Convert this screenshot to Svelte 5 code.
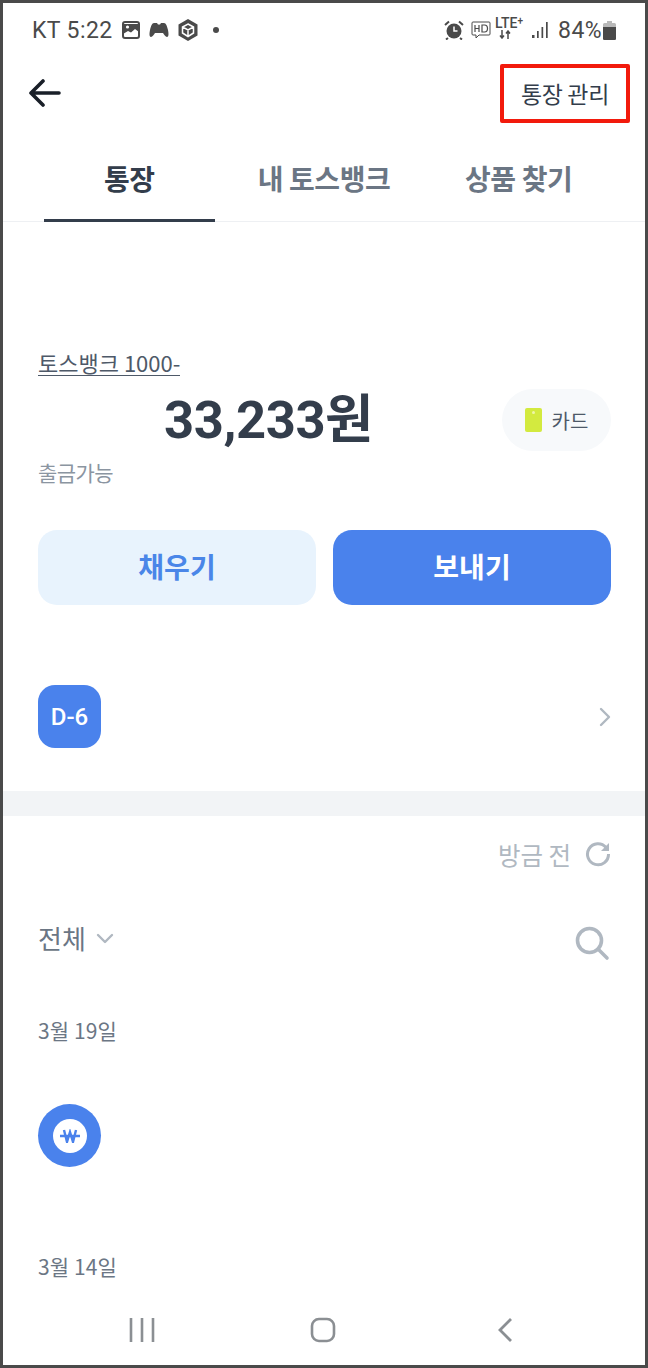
<script>
  const tabs = [
    { label: '통장', active: true },
    { label: '내 토스뱅크', active: false },
    { label: '상품 찾기', active: false }
  ];
</script>

<div class="screen">
  <div class="status">
    <div class="status-left">
      <span class="st-text">KT 5:22</span>
      <svg class="ic" width="18" height="18" viewBox="0 0 18 18"><rect x="1" y="1" width="16" height="16" rx="2" fill="none" stroke="#4a4a4a" stroke-width="2"/><path d="M1 3h16v8l-4-3-4 3.5-3-1.5-5 3z" fill="#4a4a4a"/><circle cx="5.5" cy="6" r="1.6" fill="#fff"/></svg>
      <svg class="ic m1" width="20" height="14" viewBox="0 0 20 14"><path d="M5 0h3l1 1.500h2l1-1.500h3c2 0 3 3 4 7 .6 3 1 7-1 7-1.500 0-3-2.500-4-4H6c-1 1.500-2.500 4-4 4-2 0-1.600-4-1-7 1-4 2-7 4-7z" fill="#4a4a4a"/></svg>
      <svg class="ic m2" width="20" height="22" viewBox="0 0 20 22"><path d="M10 0l9.500 5.500v11L10 22 .5 16.500v-11z" fill="#4a4a4a"/><path d="M10 5l5.500 3v6L10 17.500 4.500 14V8zM4.500 8L10 11l5.500-3M10 11v6.500" fill="none" stroke="#fff" stroke-width="1.500"/></svg>
      <span class="dot"></span>
    </div>
    <div class="status-right">
      <svg width="20" height="20" viewBox="0 0 20 20"><circle cx="10" cy="11" r="7.500" fill="#4a4a4a"/><path d="M10 6.500V11h3.500" fill="none" stroke="#fff" stroke-width="1.500"/><path d="M1 5l4-3.500M19 5l-4-3.500M4 18l-2 1.500M16 18l2 1.500" stroke="#4a4a4a" stroke-width="2"/></svg>
      <svg class="hd" width="20" height="18" viewBox="0 0 20 18"><path d="M2 1h16a1 1 0 0 1 1 1v11a1 1 0 0 1-1 1H8l-3 3v-3H2a1 1 0 0 1-1-1V2a1 1 0 0 1 1-1z" fill="none" stroke="#4a4a4a" stroke-width="1"/><path d="M4 4v7M8 4v7M4 7.500h4M11 4v7h2.500c2 0 3-1.500 3-3.500S15.500 4 13.500 4z" fill="none" stroke="#4a4a4a" stroke-width="1.200"/></svg>
      <span class="lte">LTE<sup>+</sup><svg class="lte-arrows" width="12" height="9" viewBox="0 0 12 9"><path d="M3 0v8M1 5.500L3 8l2-2.500M9 9V1M7 3.500L9 1l2 2.500" fill="none" stroke="#4a4a4a" stroke-width="1.500"/></svg></span>
      <svg class="sig" width="18" height="16" viewBox="0 0 18 16"><path d="M1 13h2.500v3H1zM6 9h1.700v7H6zM10.500 5h1.700v11h-1.700zM15 0h1.700v16H15z" fill="#4a4a4a"/></svg>
      <span class="st-text">84%</span>
      <svg class="bat" width="13" height="19" viewBox="0 0 13 19"><path d="M4 0h5v2h2.500a1.500 1.500 0 0 1 1.500 1.500V17.500a1.500 1.500 0 0 1-1.500 1.500h-10A1.500 1.500 0 0 1 0 17.500V3.500A1.500 1.500 0 0 1 1.500 2H4z" fill="#b9b9b9"/><path d="M0 6h13v11.500a1.500 1.500 0 0 1-1.500 1.500h-10A1.500 1.500 0 0 1 0 17.500z" fill="#4a4a4a"/></svg>
    </div>
  </div>

  <div class="topbar">
    <svg class="back" width="32" height="28" viewBox="0 0 32 28"><path d="M14 2L2 14l12 12M3 14h27" fill="none" stroke="#191f28" stroke-width="3.600" stroke-linecap="round" stroke-linejoin="round"/></svg>
    <div class="manage">통장 관리</div>
  </div>

  <div class="tabs">
    {#each tabs as t}
      <div class="tab" class:active={t.active}><span>{t.label}</span></div>
    {/each}
  </div>

  <section class="account">
    <div class="acc-name">토스뱅크 1000-</div>
    <div class="bal-row">
      <div class="balance">33,233원</div>
      <div class="pill"><span class="chip"></span>카드</div>
    </div>
    <div class="avail">출금가능</div>
    <div class="actions">
      <div class="btn light">채우기</div>
      <div class="btn solid">보내기</div>
    </div>
    <div class="dday">
      <div class="badge">D-6</div>
      <svg width="12" height="20" viewBox="0 0 12 20"><path d="M2 2l8 8-8 8" fill="none" stroke="#b0b8c1" stroke-width="2.400" stroke-linecap="round" stroke-linejoin="round"/></svg>
    </div>
  </section>

  <div class="sep"></div>

  <section class="history">
    <div class="refresh">
      <span>방금 전</span>
      <svg width="26" height="26" viewBox="0 0 26 26"><path d="M21 6.500A10.500 10.500 0 1 0 23.500 13" fill="none" stroke="#b0b8c1" stroke-width="3"/><path d="M24 2v8h-8z" fill="#b0b8c1"/></svg>
    </div>
    <div class="filter">
      <div class="all">전체
        <svg width="18" height="11" viewBox="0 0 18 11"><path d="M2 2l7 7 7-7" fill="none" stroke="#b0b8c1" stroke-width="2.400" stroke-linecap="round" stroke-linejoin="round"/></svg>
      </div>
      <svg class="search" width="36" height="36" viewBox="0 0 36 36"><circle cx="15.500" cy="15.500" r="12" fill="none" stroke="#b0b8c1" stroke-width="3.600"/><path d="M24 24l9 9" stroke="#b0b8c1" stroke-width="3.600" stroke-linecap="round"/></svg>
    </div>
    <div class="date first">3월 19일</div>
    <div class="coin"><span class="coin-in"><svg width="20" height="14" viewBox="0 0 20 14"><path d="M4 1l3 12 3-10 3 10 3-12M0 7h20" fill="none" stroke="#4a82ec" stroke-width="2.400"/></svg></span></div>
    <div class="date second">3월 14일</div>
  </section>

  <nav class="nav">
    <svg width="26" height="24" viewBox="0 0 26 24"><path d="M2 0v24M13 0v24M24 0v24" stroke="#8b8f93" stroke-width="2.600"/></svg>
    <svg class="home" width="26" height="26" viewBox="0 0 26 26"><rect x="2" y="2" width="22" height="22" rx="7" fill="none" stroke="#8b8f93" stroke-width="2.600"/></svg>
    <svg width="16" height="26" viewBox="0 0 16 26"><path d="M14 2L3 13l11 11" fill="none" stroke="#8b8f93" stroke-width="2.800"/></svg>
  </nav>
</div>

<style>
  :global(body) { margin: 0; background: #fff; }
  .screen {
    box-sizing: border-box;
    width: 648px;
    height: 1368px;
    border: 3px solid #4a4a4a;
    background: #fff;
    font-family: "Noto Sans CJK KR", "Noto Sans", Roboto, sans-serif;
    display: flex;
    flex-direction: column;
    overflow: hidden;
  }
  .status {
    box-sizing: border-box;
    height: 58px;
    padding: 0 29px 4px 29px;
    display: flex;
    justify-content: space-between;
    align-items: center;
    color: #4a4a4a;
    flex: none;
  }
  .status-left, .status-right { display: flex; align-items: center; }
  .st-text { font-family: Roboto, sans-serif; font-size: 23px; letter-spacing: 0.4px; color: #4a4a4a; }
  .ic { margin-left: 9px; }
  .dot { width: 6px; height: 6px; border-radius: 50%; background: #4a4a4a; margin-left: 15px; }
  .hd { margin-left: 7px; }
  .lte { position: relative; width: 30px; height: 24px; margin-left: 4px; margin-top: -4px; font-family: Roboto, sans-serif; font-size: 14px; line-height: 14px; color: #4a4a4a; font-weight: 500; }
  .lte sup { font-size: 10px; line-height: 0; vertical-align: 4px; }
  .lte-arrows { position: absolute; left: 4px; top: 14px; }
  .sig { margin: 0 9px 0 6px; }
  .bat { margin-left: 1px; }

  .topbar {
    height: 64px;
    padding: 0 15px 0 26px;
    display: flex;
    justify-content: space-between;
    align-items: center;
    flex: none;
  }
  .manage {
    box-sizing: border-box;
    width: 130px;
    height: 59px;
    border: 4px solid #f21a0c;
    border-radius: 2px;
    display: flex;
    align-items: center;
    justify-content: center;
    font-size: 23px;
    letter-spacing: -0.4px;
    color: #333d4b;
  }
  .tabs {
    height: 97px;
    padding: 0 29px;
    display: flex;
    border-bottom: 1px solid #eef0f3;
    flex: none;
    box-sizing: border-box;
  }
  .tab {
    flex: 1;
    padding: 0 12px;
    display: flex;
    flex-direction: column;
  }
  .tab span {
    flex: 1;
    display: flex;
    align-items: center;
    justify-content: center;
    font-size: 28px;
    font-weight: 700;
    letter-spacing: -0.4px;
    color: #6b7684;
    border-bottom: 3px solid transparent;
    margin-bottom: -1px;
    padding-top: 12px;
  }
  .tab.active span { color: #333d4b; border-bottom-color: #333d4b; }

  .account { padding: 127px 34px 0 35px; flex: none; }
  .acc-name {
    display: inline-block;
    font-size: 22px;
    line-height: 26px;
    color: #4e5968;
    letter-spacing: 0;
    border-bottom: 1px solid #4e5968;
  }
  .bal-row { display: flex; align-items: center; height: 62px; margin-top: 12px; }
  .balance {
    flex: 1;
    font-family: Roboto, "Noto Sans CJK KR", sans-serif;
    padding: 0 0 10px 126px;
    font-size: 52.5px;
    font-weight: 700;
    letter-spacing: -0.4px;
    color: #333d4b;
  }
  .pill {
    width: 109px;
    height: 62px;
    border-radius: 31px;
    background: #f7f9fb;
    display: flex;
    align-items: center;
    justify-content: center;
    gap: 10px;
    font-size: 20px;
    color: #4e5968;
  }
  .chip { position: relative; width: 17px; height: 24px; border-radius: 2px; background: #d3ea3f; }
  .chip::after { content: ""; position: absolute; left: 7px; top: 3px; width: 3px; height: 3px; border-radius: 50%; background: #eef6a8; }
  .avail { margin-top: 6px; font-size: 21px; line-height: 30px; color: #8b95a1; letter-spacing: -0.6px; }
  .actions { display: flex; gap: 17px; margin-top: 43px; }
  .btn {
    box-sizing: border-box;
    flex: 1;
    height: 75px;
    padding-bottom: 3px;
    border-radius: 19px;
    display: flex;
    align-items: center;
    justify-content: center;
    font-size: 28px;
    font-weight: 700;
  }
  .light { background: #e8f3fd; color: #4a86e8; }
  .solid { background: #4a82ec; color: #fff; }
  .dday { display: flex; justify-content: space-between; align-items: center; margin-top: 80px; height: 63px; }
  .badge {
    width: 63px;
    height: 63px;
    border-radius: 17px;
    background: #4a82ec;
    color: #fff;
    font-family: Roboto, sans-serif;
    font-size: 24px;
    font-weight: 500;
    display: flex;
    align-items: center;
    justify-content: center;
  }
  .sep { height: 25px; background: #f2f4f6; margin-top: 43px; flex: none; }

  .history { padding: 0 34px 0 35px; flex: 1; }
  .refresh {
    display: flex;
    justify-content: flex-end;
    align-items: center;
    gap: 14px;
    margin-top: 23px;
    height: 30px;
    font-size: 24.5px;
    color: #b0b8c1;
  }
  .filter { display: flex; justify-content: space-between; align-items: flex-start; margin-top: 49px; padding-right: 1px; }
  .search { margin-top: 7px; }
  .all { display: flex; align-items: center; gap: 10px; font-size: 26px; line-height: 40px; color: #6b7684; }
  .date { font-size: 21px; line-height: 30px; color: #6b7684; letter-spacing: 0.1px; }
  .first { margin-top: 54px; }
  .coin { width: 63px; height: 63px; border-radius: 50%; background: #4a82ec; display: flex; align-items: center; justify-content: center; margin-top: 59px; }
  .coin-in { width: 34px; height: 34px; border-radius: 50%; background: #fff; display: flex; align-items: center; justify-content: center; }
  .second { margin-top: 84px; }

  .nav {
    display: flex;
    justify-content: space-between;
    align-items: center;
    padding: 0 132px 0 126px;
    height: 44px;
    margin-bottom: 13px;
    flex: none;
  }
  .home { margin-right: 7px; }
</style>
